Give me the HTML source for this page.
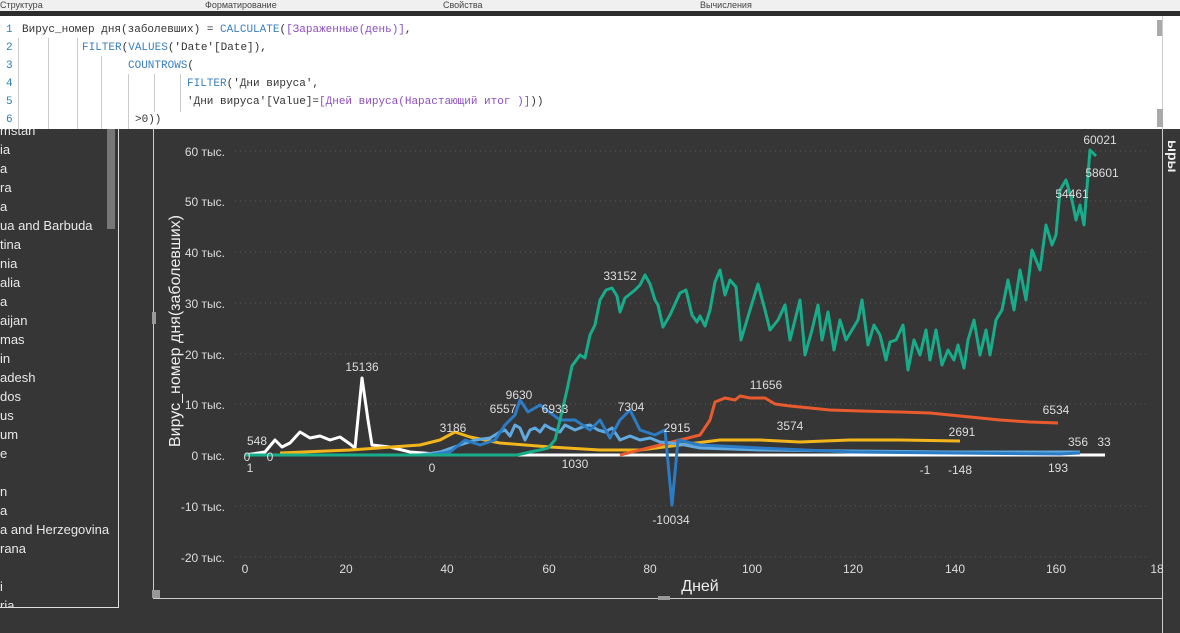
<!DOCTYPE html><html><head><meta charset="utf-8"><style>
body{margin:0;width:1180px;height:633px;overflow:hidden;background:#363636;font-family:"Liberation Sans",sans-serif;position:relative}
.top{position:absolute;left:0;top:0;width:1180px;height:11px;background:#f0f0f0;font-size:9px;color:#444;line-height:10px}
.top span{position:absolute;top:0}
.bar{position:absolute;left:0;top:11px;width:1180px;height:5px;background:#2d2d2d}
.ed{position:absolute;left:0;top:16px;width:1162px;height:113px;background:#fff;font-family:"Liberation Mono","DejaVu Sans Mono",monospace;font-size:11px;color:#333}
.ed div{position:absolute;white-space:pre}
.ed .g{width:1px;background:#ccc;white-space:normal}
.n{color:#2b7fb8}.k{color:#3a7fc0}.p{color:#8a4fbf}
.rs{position:absolute;left:1162px;top:16px;width:18px;height:113px;background:#fff;border-left:1px solid #ccc}
.list{position:absolute;left:0;top:129px;width:118px;height:478px;border-right:1px solid #ddd;border-bottom:1px solid #ddd;color:#e8e8e8;font-size:13px;overflow:hidden}
.list div{position:absolute;left:0;white-space:nowrap}
</style></head><body>
<div class="top"><span style="left:0">Структура</span><span style="left:205px">Форматирование</span><span style="left:443px">Свойства</span><span style="left:700px">Вычисления</span></div>
<div class="bar"></div>
<div class="ed">
<div class="n" style="left:6px;top:8px">1</div><div class="n" style="left:6px;top:26px">2</div><div class="n" style="left:6px;top:44px">3</div><div class="n" style="left:6px;top:62px">4</div><div class="n" style="left:6px;top:80px">5</div><div class="n" style="left:6px;top:98px">6</div>
<div class="g" style="left:18px;top:22px;height:91px"></div>
<div class="g" style="left:48px;top:22px;height:91px"></div>
<div class="g" style="left:77px;top:22px;height:91px"></div>
<div class="g" style="left:101px;top:40px;height:73px"></div>
<div class="g" style="left:128px;top:58px;height:55px"></div>
<div class="g" style="left:154px;top:58px;height:38px"></div>
<div class="g" style="left:180px;top:58px;height:38px"></div>
<div style="left:22px;top:8px">Вирус_номер дня(заболевших) = <span class="k">CALCULATE</span>(<span class="p">[Зараженные(день)]</span>,</div>
<div style="left:82px;top:26px"><span class="k">FILTER</span>(<span class="k">VALUES</span>('Date'[Date]),</div>
<div style="left:128px;top:44px"><span class="k">COUNTROWS</span>(</div>
<div style="left:187px;top:62px"><span class="k">FILTER</span>('Дни вируса',</div>
<div style="left:187px;top:80px">'Дни вируса'[Value]=<span class="p">[Дней вируса(Нарастающий итог )]</span>))</div>
<div style="left:135px;top:98px">&gt;0))</div>
<div style="left:1157px;top:4px;width:6px;height:16px;background:#aaa"></div>
</div>
<div class="rs"><div style="position:absolute;left:-6px;top:93px;width:6px;height:18px;background:#aaa"></div></div>
<div class="list">
<div style="top:-6px">mstan</div><div style="top:13px">ia</div><div style="top:32px">a</div><div style="top:51px">ra</div><div style="top:70px">a</div><div style="top:89px">ua and Barbuda</div><div style="top:108px">tina</div><div style="top:127px">nia</div><div style="top:146px">alia</div><div style="top:165px">a</div><div style="top:184px">aijan</div><div style="top:203px">mas</div><div style="top:222px">in</div><div style="top:241px">adesh</div><div style="top:260px">dos</div><div style="top:279px">us</div><div style="top:298px">um</div><div style="top:317px">e</div><div style="top:355px">n</div><div style="top:374px">a</div><div style="top:393px">a and Herzegovina</div><div style="top:412px">rana</div><div style="top:450px">i</div><div style="top:469px">ria</div>
<div style="left:107px;top:0;width:8px;height:100px;background:#777"></div>
</div>
<svg width="1180" height="633" style="position:absolute;left:0;top:0" font-family="Liberation Sans,sans-serif">
<line x1="153.5" y1="129" x2="153.5" y2="598" stroke="#ccc"/>
<line x1="153" y1="598.5" x2="1162" y2="598.5" stroke="#ccc"/>
<line x1="1162.5" y1="129" x2="1162.5" y2="633" stroke="#ccc"/>
<rect x="152" y="590" width="8" height="8" fill="#999"/><rect x="152" y="312" width="4" height="12" fill="#999"/><rect x="658" y="596" width="12" height="4" fill="#999"/>
<text transform="translate(1168,140) rotate(90)" fill="#eee" font-size="14" font-weight="bold">ыры</text>
<g stroke="#5a5a5a" stroke-dasharray="1 4">
<line x1="235" y1="151" x2="1150" y2="151"/><line x1="235" y1="201" x2="1150" y2="201"/><line x1="235" y1="252" x2="1150" y2="252"/><line x1="235" y1="303" x2="1150" y2="303"/><line x1="235" y1="354" x2="1150" y2="354"/><line x1="235" y1="404" x2="1150" y2="404"/><line x1="235" y1="506" x2="1150" y2="506"/><line x1="235" y1="557" x2="1150" y2="557"/>
</g>
<g fill="#ddd" font-size="12" text-anchor="end">
<text x="225" y="156">60 тыс.</text><text x="225" y="206">50 тыс.</text><text x="225" y="257">40 тыс.</text><text x="225" y="308">30 тыс.</text><text x="225" y="359">20 тыс.</text><text x="225" y="409">10 тыс.</text><text x="225" y="460">0 тыс.</text><text x="225" y="511">-10 тыс.</text><text x="225" y="562">-20 тыс.</text>
</g>
<g fill="#ddd" font-size="12" text-anchor="middle">
<text x="245" y="573">0</text><text x="346" y="573">20</text><text x="447" y="573">40</text><text x="549" y="573">60</text><text x="650" y="573">80</text><text x="752" y="573">100</text><text x="853" y="573">120</text><text x="955" y="573">140</text><text x="1056" y="573">160</text><text x="1157" y="573">18</text>
</g>
<text x="700" y="591" fill="#eee" font-size="16" text-anchor="middle">Дней</text>
<text transform="translate(180,447) rotate(-90)" fill="#eee" font-size="16">Вирус_номер дня(заболевших)</text>
<g fill="none" stroke-width="3" stroke-linejoin="round">
<polyline stroke="#fff" points="245,455 265,452 275,440 282,447 290,443 300,432 310,438 320,436 330,440 340,437 350,444 355,448 362,378 368,420 372,445 390,447 410,452 450,455 1105,455"/>
<polyline stroke="#f2b51c" points="280,453 350,450 420,445 440,440 455,432 470,437 500,443 550,447 600,450 640,450 680,445 720,440 760,440 800,442 850,440 900,440 960,441"/>
<polyline stroke="#e95b2e" points="620,455 640,450 660,445 680,440 700,435 710,420 715,402 725,398 735,400 740,396 750,398 765,398 775,404 790,406 810,408 830,410 860,411 900,412 930,413 960,416 1000,420 1030,422 1058,423"/>
<polyline stroke="#5fa9e0" points="420,455 440,452 460,445 475,440 490,438 500,432 505,430 510,436 515,425 520,428 525,440 530,430 535,428 540,432 545,425 550,428 560,432 565,425 575,430 585,426 590,425 598,430 605,432 612,428 620,440 630,436 640,440 650,438 660,442 680,444 700,448 760,450 850,451 950,452 1080,452"/>
<polyline stroke="#2b7cc4" points="245,455 430,455 450,452 465,440 480,445 495,440 505,425 515,415 520,400 528,412 540,405 560,420 575,420 590,430 600,420 610,438 620,420 630,410 640,430 655,435 665,430 672,505 678,440 700,445 760,448 850,452 950,453 1060,454 1080,453"/>
<polyline stroke="#18ad8a" points="245,455 517,455 530,452 540,450 548,448 555,440 560,420 567,390 572,366 580,355 585,358 590,335 595,325 600,300 606,290 612,288 617,296 620,312 625,298 635,290 640,285 645,275 650,284 655,300 658,305 663,327 670,315 680,293 686,290 692,315 697,322 700,316 705,326 710,310 715,282 720,270 725,295 730,280 736,287 741,340 750,310 758,284 765,310 770,330 778,320 785,305 790,340 795,320 800,300 805,355 812,330 818,305 822,340 828,312 834,350 840,320 846,340 852,330 858,320 862,300 868,345 874,325 880,335 886,360 890,342 896,340 903,325 908,370 914,340 920,355 926,330 930,360 936,330 942,365 948,350 954,360 958,345 964,368 968,340 974,320 980,355 986,330 990,355 996,320 1002,310 1008,280 1014,310 1020,270 1026,300 1032,250 1040,270 1046,225 1052,245 1056,235 1060,190 1066,180 1072,200 1076,220 1080,205 1084,225 1090,150 1096,156"/>
</g>
<g fill="#ddd" font-size="12" text-anchor="middle">
<text x="1100" y="144">60021</text><text x="1102" y="177">58601</text><text x="1072" y="198">54461</text><text x="620" y="280">33152</text><text x="362" y="371">15136</text><text x="766" y="389">11656</text><text x="519" y="399">9630</text><text x="503" y="413">6557</text><text x="555" y="413">6933</text><text x="631" y="411">7304</text><text x="453" y="432">3186</text><text x="677" y="432">2915</text><text x="790" y="430">3574</text><text x="962" y="436">2691</text><text x="1056" y="414">6534</text><text x="1078" y="446">356</text><text x="1104" y="446">33</text><text x="257" y="445">548</text><text x="247" y="461">0</text><text x="270" y="461">0</text><text x="250" y="472">1</text><text x="432" y="472">0</text><text x="575" y="468">1030</text><text x="671" y="524">-10034</text><text x="925" y="474">-1</text><text x="960" y="474">-148</text><text x="1058" y="472">193</text>
</g>
</svg>
</body></html>
